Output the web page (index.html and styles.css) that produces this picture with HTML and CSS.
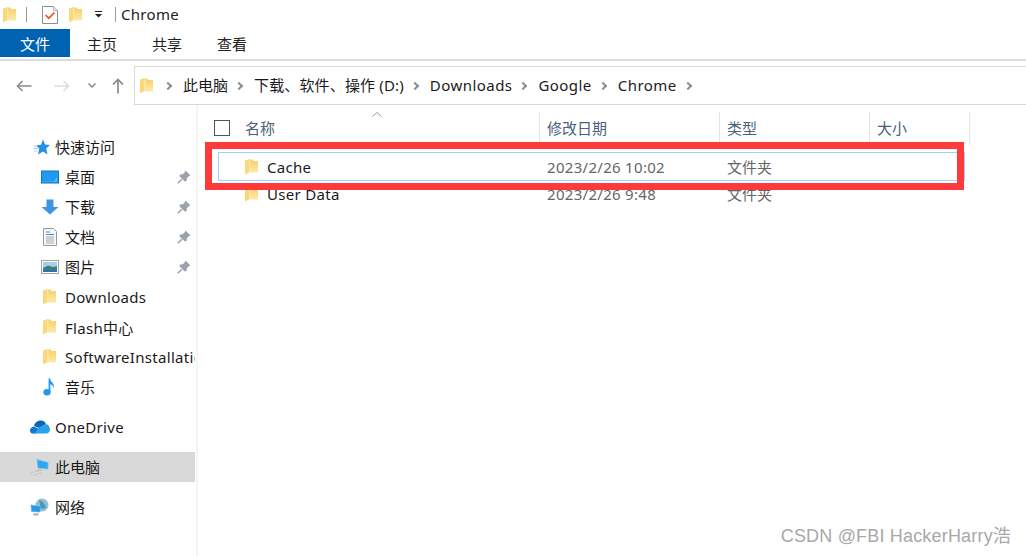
FILE: index.html
```html
<!DOCTYPE html>
<html lang="zh">
<head>
<meta charset="utf-8">
<title>Chrome</title>
<link rel="stylesheet" href="styles.css">
</head>
<body>
<svg class="defs" width="0" height="0">
  <defs>
    <linearGradient id="fg" x1="0" y1="0" x2="0" y2="1"><stop offset="0" stop-color="#f6cf68"/><stop offset="1" stop-color="#fdeaa8"/></linearGradient>
    <symbol id="folder" viewBox="0 0 13 16">
      <path d="M3 0.500H7.500L8.500 2H13V13.500H3Z" fill="url(#fg)"/>
      <path d="M0 1.500L4.500 0.500V13L0 15.500Z" fill="#f9d877"/>
      <path d="M4.800 1V13" stroke="#fdf3cf" stroke-width="0.800"/>
    </symbol>
    <symbol id="pin" viewBox="0 0 14 14">
      <path d="M8.500 0.500L13.500 5.500L11.800 6.200L9.800 8.200L9.600 11L7.800 11.600L2.400 6.200L3 4.400L5.800 4.200L7.800 2.200Z" fill="#9aa2ab"/>
      <path d="M4.800 9.200L0.800 13.200" stroke="#9aa2ab" stroke-width="1.600"/>
    </symbol>
  </defs>
</svg>
<div class="window">
  <header class="titlebar">
    <svg class="folder qa-first"><use href="#folder"/></svg>
    <span class="qa-sep sep-a"></span>
    <svg class="qa-check" viewBox="0 0 16 18">
      <path d="M0.500 0.500H11.500L15.500 4.500V17.500H0.500Z" fill="#fff" stroke="#8e8e8e"/>
      <path d="M11.500 0.500V4.500H15.500" fill="#e8e8e8" stroke="#b5b5b5"/>
      <path d="M3.500 9L6.800 12.200L12.500 6.500" fill="none" stroke="#e8562a" stroke-width="1.700"/>
    </svg>
    <svg class="folder qa-second"><use href="#folder"/></svg>
    <svg class="qa-drop" viewBox="0 0 7 7">
      <rect x="0" y="0" width="7" height="1" fill="#222"/>
      <path d="M0 3H7L3.500 6.500Z" fill="#222"/>
    </svg>
    <span class="qa-sep sep-b"></span>
    <span class="title-text latin">Chrome</span>
  </header>

  <nav class="tabs">
    <span class="tab tab-file">文件</span>
    <span class="tab">主页</span>
    <span class="tab">共享</span>
    <span class="tab">查看</span>
  </nav>

  <div class="addressrow">
    <div class="navbtns">
      <svg class="nav-back" viewBox="0 0 16 12"><path d="M15.500 6H1.500M6.500 1L1.500 6L6.500 11" fill="none" stroke="#8a8a8a" stroke-width="1.600"/></svg>
      <svg class="nav-forward" viewBox="0 0 16 12"><path d="M0.500 6H14.500M9.500 1L14.500 6L9.500 11" fill="none" stroke="#dcdcdc" stroke-width="1.600"/></svg>
      <svg class="nav-down" viewBox="0 0 8 5"><path d="M0.500 0.500L4 4L7.500 0.500" fill="none" stroke="#8a8a8a" stroke-width="1.500"/></svg>
      <svg class="nav-up" viewBox="0 0 12 16"><path d="M6 15.500V1.500M1 6.500L6 1.500L11 6.500" fill="none" stroke="#8a8a8a" stroke-width="1.700"/></svg>
    </div>
    <div class="addressbar">
      <svg class="folder addr-folder"><use href="#folder"/></svg>
      <span class="chev"></span><span class="crumb">此电脑</span>
      <span class="chev"></span><span class="crumb mixed">下载、软件、操作 (D:)</span>
      <span class="chev"></span><span class="crumb crumb-latin">Downloads</span>
      <span class="chev"></span><span class="crumb crumb-latin">Google</span>
      <span class="chev"></span><span class="crumb crumb-latin">Chrome</span>
      <span class="chev"></span>
    </div>
  </div>

  <main class="content">
    <aside class="sidebar">
      <section class="navgroup">
        <div class="navitem top">
          <svg class="navicon star" viewBox="0 0 17 16">
            <path d="M10 0.500L12 5.500L17 6L13.200 9.500L14.500 15.500L10 12.500L5 15.500L6.300 9.500L3 6.500L8 5.800Z" fill="#2b8fe0"/>
            <path d="M0.500 7H4M0 9.500H5M1 12H4.500" stroke="#a9d4f5" stroke-width="1"/>
          </svg>
          <span class="cjk">快速访问</span>
        </div>
        <div class="navitem child">
          <svg class="navicon wide" viewBox="0 0 18 13">
            <rect x="0.500" y="0.500" width="17" height="12" fill="#1e9af0" stroke="#1573bd"/>
            <path d="M1 11L13 11L16 6V11.500H1Z" fill="#53b9f7"/>
          </svg>
          <span class="navlabel cjk">桌面</span>
          <svg class="pin"><use href="#pin"/></svg>
        </div>
        <div class="navitem child">
          <svg class="navicon wide" viewBox="0 0 18 16"><path d="M5.500 0.500H12.500V8H17.500L9 15.500L0.500 8H5.500Z" fill="#3f95e3"/></svg>
          <span class="navlabel cjk">下载</span>
          <svg class="pin"><use href="#pin"/></svg>
        </div>
        <div class="navitem child">
          <svg class="navicon wide" viewBox="0 0 18 18">
            <path d="M2.500 0.500H12.500L15.500 3.500V17.500H2.500Z" fill="#f7f7f7" stroke="#9a9a9a"/>
            <path d="M5 4H9M5 6.500H13" stroke="#3d94dc"/>
            <path d="M5 9H13M5 11H13M5 13H13M5 15H13" stroke="#a8a8a8"/>
          </svg>
          <span class="navlabel cjk">文档</span>
          <svg class="pin"><use href="#pin"/></svg>
        </div>
        <div class="navitem child">
          <svg class="navicon wide" viewBox="0 0 18 14">
            <rect x="0.500" y="0.500" width="17" height="13" fill="#fff" stroke="#a3a3a3"/>
            <rect x="2" y="2" width="14" height="10" fill="#a9cdea"/>
            <path d="M2 8L7 5.500L12 7L16 6V12H2Z" fill="#3f7f74"/>
            <path d="M2 10.500L16 9.500V12H2Z" fill="#2f6fb5"/>
          </svg>
          <span class="navlabel cjk">图片</span>
          <svg class="pin"><use href="#pin"/></svg>
        </div>
        <div class="navitem child">
          <svg class="folder navfolder"><use href="#folder"/></svg>
          <span class="navlabel latin">Downloads</span>
        </div>
        <div class="navitem child">
          <svg class="folder navfolder"><use href="#folder"/></svg>
          <span class="navlabel latin">Flash中心</span>
        </div>
        <div class="navitem child">
          <svg class="folder navfolder"><use href="#folder"/></svg>
          <span class="navlabel clip latin">SoftwareInstallation</span>
        </div>
        <div class="navitem child">
          <svg class="navicon wide" viewBox="0 0 18 18">
            <path d="M8.500 0.500V14" stroke="#1e9af0" stroke-width="1.800"/>
            <ellipse cx="6" cy="14.200" rx="3.600" ry="3.300" fill="#1e9af0"/>
            <path d="M8.500 0.500C9.500 4 13.500 4.500 13 10C12 7.500 10.500 6.500 8.500 6Z" fill="#1e9af0"/>
          </svg>
          <span class="navlabel cjk">音乐</span>
        </div>
      </section>

      <section class="navgroup">
        <div class="navitem top">
          <svg class="navicon onedrive" viewBox="0 0 20 14">
            <path d="M4 6C5 2 8 0.500 11 0.500C13.500 0.500 15 2 16 4L9 8Z" fill="#0a64b8"/>
            <path d="M2 13.500C0.500 13 0 11.500 0 10.500C0 8.500 1.500 7 4 6.500L9 9L6 13.500Z" fill="#0f78d4"/>
            <path d="M16 4C18.500 4.500 20 7 20 9.500C20 12 18 13.500 16 13.500H4L9 8Z" fill="#29a3ea"/>
          </svg>
          <span class="latin">OneDrive</span>
        </div>
      </section>

      <section class="navgroup">
        <div class="navitem top selected">
          <svg class="navicon pc" viewBox="0 0 20 17">
            <path d="M7 0.500L18 3.500V10L8 9Z" fill="#2fa7f3" stroke="#7dbfe8" stroke-width="0.800"/>
            <path d="M9 10L13 11L8 13L4 12Z" fill="#c4c4c4"/>
            <path d="M0 14L9 11.500M3 16.500L12 13.500" stroke="#c8c8c8" stroke-width="1"/>
          </svg>
          <span class="cjk">此电脑</span>
        </div>
      </section>

      <section class="navgroup">
        <div class="navitem top">
          <svg class="navicon net" viewBox="0 0 20 18">
            <circle cx="12" cy="7" r="6.500" fill="#8fc0d6"/>
            <path d="M9 2C12 3 15 5 16 10L11 11Z" fill="#4e97b8"/>
            <path d="M1 7L10 8.500V14L1.500 13.500Z" fill="#1f9bef" stroke="#5da9d9" stroke-width="0.600"/>
            <path d="M3 15.500H9L8 17.500H4Z" fill="#a8a8a8"/>
          </svg>
          <span class="cjk">网络</span>
        </div>
      </section>
    </aside>

    <section class="filelist">
      <div class="listheader">
        <div class="col col-name">
          <span class="checkbox"></span>
          <span class="col-title">名称</span>
          <svg class="sortcaret" viewBox="0 0 10 5"><path d="M0.500 4.500L5 0.500L9.500 4.500" fill="none" stroke="#9b9b9b"/></svg>
        </div>
        <div class="col col-date"><span class="col-title">修改日期</span></div>
        <div class="col col-type"><span class="col-title">类型</span></div>
        <div class="col col-size"><span class="col-title">大小</span></div>
      </div>
      <div class="row row-active">
        <div class="cell cell-name"><svg class="folder rowfolder"><use href="#folder"/></svg><span class="latin">Cache</span></div>
        <div class="cell cell-date latin">2023/2/26 10:02</div>
        <div class="cell cell-type">文件夹</div>
      </div>
      <div class="row row-second">
        <div class="cell cell-name"><svg class="folder rowfolder"><use href="#folder"/></svg><span class="latin">User Data</span></div>
        <div class="cell cell-date latin">2023/2/26 9:48</div>
        <div class="cell cell-type">文件夹</div>
      </div>
    </section>
  </main>
</div>
<div class="redbox"></div>
<div class="watermark">CSDN @FBI HackerHarry浩</div>
</body>
</html>
```

FILE: styles.css
```css
* { box-sizing: border-box; }
html, body { margin: 0; height: 100%; }
body {
  background: #fff;
  color: #111;
  font-family: "Noto Sans", "Noto Sans CJK SC", sans-serif;
  font-size: 15px;
  overflow: hidden;
  position: relative;
}
.defs { position: absolute; }
.window { width: 1026px; height: 556px; display: flex; flex-direction: column; }
.latin { letter-spacing: 0.3px; }
.crumb-latin { letter-spacing: 0.45px; }
.mixed { letter-spacing: 0.15px; }
.cjk { margin-top: -2px; }

/* Title bar */
.titlebar { height: 29px; display: flex; align-items: center; padding-left: 3px; }
.folder { display: block; width: 13px; height: 16px; flex: none; }
.qa-first { margin-right: 10px; }
.qa-sep { width: 1px; height: 15px; background: #9a9a9a; flex: none; }
.qa-check { width: 16px; height: 18px; margin-left: 15px; flex: none; }
.qa-second { margin-left: 11px; }
.qa-drop { width: 7px; height: 7px; margin-left: 13px; flex: none; }
.sep-b { margin-left: 13px; }
.title-text { margin-left: 5px; margin-bottom: 1px; font-size: 15px; line-height: 20px; color: #222; }

/* Ribbon tabs */
.tabs {
  height: 32px;
  display: flex;
  align-items: flex-start;
  border-bottom: 2px solid #dcdcdc;
  gap: 35px;
}
.tab { height: 28px; line-height: 30px; font-size: 15px; color: #222; }
.tab-file {
  width: 70px;
  margin-right: -18px;
  background: #0063b1;
  color: #fff;
  text-align: center;
}

/* Address row */
.addressrow { height: 44px; padding-top: 5px; display: flex; }
.navbtns { width: 134px; height: 39px; display: flex; align-items: center; flex: none; }
.nav-back { width: 16px; height: 12px; margin-left: 16px; }
.nav-forward { width: 16px; height: 12px; margin-left: 22px; }
.nav-down { width: 8px; height: 5px; margin-left: 18px; }
.nav-up { width: 12px; height: 16px; margin-left: 16px; }
.addressbar {
  flex: 1;
  height: 39px;
  border: 1px solid #d9d9d9;
  border-right: 0;
  display: flex;
  align-items: center;
  padding-left: 5px;
}
.addr-folder { margin-right: 4px; }
.chev {
  width: 6px;
  height: 6px;
  margin: 0 12px 0 8px;
  border-top: 2px solid #8f8f8f;
  border-right: 2px solid #8f8f8f;
  transform: rotate(45deg);
  flex: none;
}
.crumb { font-size: 15px; color: #1a1a1a; line-height: 20px; white-space: nowrap; margin-bottom: 1px; }

/* Main area */
.content { flex: 1; display: flex; min-height: 0; }
.sidebar {
  width: 198px;
  flex: none;
  padding-top: 27px;
  border-right: 2px solid #f5f5f5;
  display: flex;
  flex-direction: column;
  gap: 10px;
}
.navitem { height: 30px; width: 195px; display: flex; align-items: center; font-size: 15px; color: #1a1a1a; }
.navitem.top { padding-left: 30px; }
.navitem.top > span { margin-left: 5px; }
.navitem.child { padding-left: 41px; }
.navitem.selected { background: #d9d9d9; }
.navicon { width: 17px; height: 16px; flex: none; margin-left: 3px; }
.navicon.star { margin-right: 0; }
.navicon.wide { width: 18px; height: 18px; margin-left: 0; }
.navicon.onedrive { width: 20px; height: 14px; margin-left: 0; }
.navicon.pc { width: 20px; height: 17px; margin-left: 0; }
.navicon.net { width: 20px; height: 18px; margin-left: 0; }
.navlabel { margin-left: 6px; flex: 1; white-space: nowrap; }
.clip { overflow: hidden; }
.navfolder { margin-left: 2px; margin-right: 9px; }
.navfolder + .navlabel { margin-left: 0; }
.pin { width: 14px; height: 14px; margin-right: 4px; flex: none; }

/* File list */
.filelist { flex: 1; min-width: 0; padding-top: 7px; }
.listheader { height: 33px; display: flex; padding-bottom: 0; }
.col { position: relative; display: flex; align-items: center; padding-bottom: 2px; border-right: 1px solid #e5e5e5; padding-left: 7px; }
.col-name { width: 342px; padding-left: 16px; }
.col-date { width: 180px; }
.col-type { width: 150px; }
.col-size { width: 100px; }
.col-title { font-size: 15px; color: #4c607a; }
.checkbox { width: 16px; height: 16px; border: 1.500px solid #555; margin-right: 15px; }
.sortcaret { position: absolute; left: 174px; top: 0; width: 10px; height: 5px; }
.row { height: 27px; margin-left: 20px; width: 747px; display: flex; align-items: center; border: 1px solid transparent; }
.row-active { height: 29px; margin-top: 7px; border-color: #99d1ff; }
.row-second { margin-top: -1px; }
.cell { font-size: 15px; color: #666; white-space: nowrap; }
.cell-name { width: 328px; padding-left: 26px; display: flex; align-items: center; color: #1a1a1a; }
.rowfolder { margin-right: 9px; }
.cell-date { width: 180px; }

/* Overlays */
.redbox {
  position: absolute;
  left: 205px;
  top: 142px;
  width: 759px;
  height: 48px;
  border: 7px solid #ff3a3a;
}
.watermark {
  position: absolute;
  right: 15px;
  top: 525px;
  font-family: "Liberation Sans", "Noto Sans CJK SC", sans-serif;
  font-size: 18px;
  letter-spacing: 0.18px;
  line-height: 22px;
  color: #a8a8a8;
  white-space: nowrap;
}
```
